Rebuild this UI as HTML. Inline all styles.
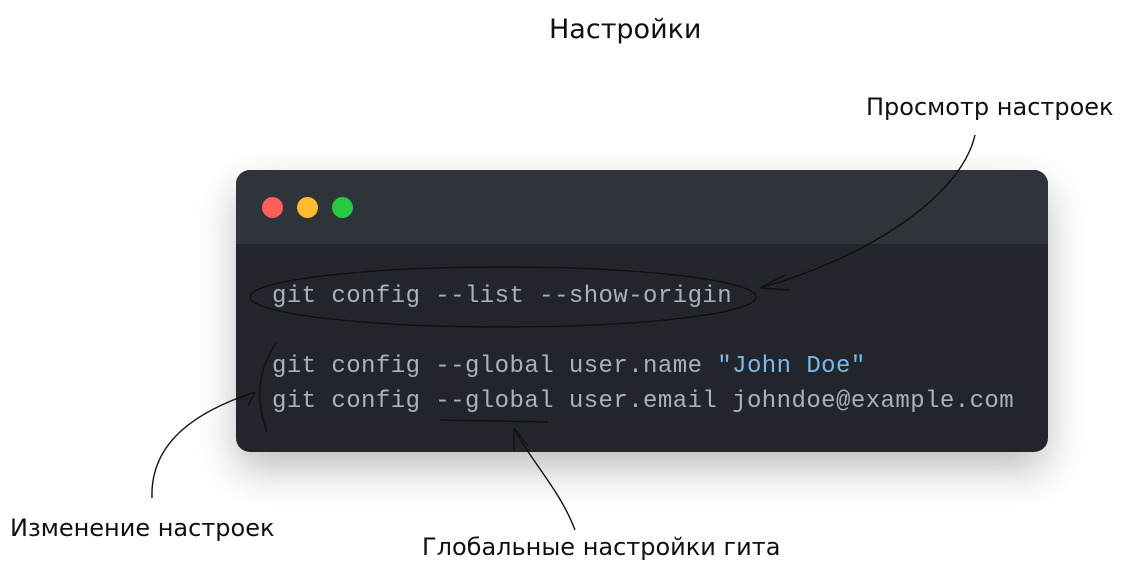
<!DOCTYPE html>
<html><head><meta charset="utf-8"><style>
html,body{margin:0;padding:0;background:#fff;width:1140px;height:575px;overflow:hidden;position:relative;font-family:"Liberation Sans",sans-serif}
.t{position:absolute;color:#111;font-family:"Comic Sans MS","DejaVu Sans",sans-serif;white-space:nowrap}
.win{position:absolute;left:236px;top:170px;width:812px;height:282px;border-radius:14px;background:#22262c;overflow:hidden;box-shadow:0 18px 40px rgba(0,0,0,0.25)}
.hdr{height:74px;background:#2f333a}
.dot{position:absolute;top:27px;width:21px;height:21px;border-radius:50%}
.code{position:absolute;left:36px;font-family:"Liberation Mono",monospace;font-size:24px;letter-spacing:0.44px;color:#aab2bb;white-space:pre}
.s{color:#79b8e8}
svg{position:absolute;left:0;top:0}
</style></head><body>
<div class="t" style="left:549px;top:14px;font-size:27px">Настройки</div>
<div class="t" style="left:866px;top:93px;font-size:24px">Просмотр настроек</div>
<div class="t" style="left:10px;top:514px;font-size:24px">Изменение настроек</div>
<div class="t" style="left:422px;top:533px;font-size:24px">Глобальные настройки гита</div>
<div class="win">
<div class="hdr"></div>
<div class="dot" style="left:26px;background:#fe5f57"></div>
<div class="dot" style="left:61px;background:#febc2e"></div>
<div class="dot" style="left:96px;background:#28c840"></div>
<div class="code" style="top:113px">git config --list --show-origin</div>
<div class="code" style="top:183px">git config --global user.name <span class="s">"John Doe"</span></div>
<div class="code" style="top:218px">git config --global user.email johndoe@example.com</div>
</div>
<svg width="1140" height="575" fill="none" stroke="#111" stroke-width="1.4">
<ellipse cx="503" cy="297" rx="253" ry="30"/>
<path d="M760 288 C 860 260, 960 200, 975 135"/>
<path d="M760 288 L 785 275 M760 288 L 790 290"/>
<path d="M276 343 C 258 370, 255 400, 267 432"/>
<path d="M255 392 C 200 410, 150 440, 152 498"/>
<path d="M255 392 L 240 398 M255 392 L 248 406"/>
<path d="M440 420 L 548 422"/>
<path d="M514 428 C 530 460, 560 490, 575 530"/>
<path d="M514 428 L 514 450 M514 428 L 528 446"/>
</svg>
</body></html>
